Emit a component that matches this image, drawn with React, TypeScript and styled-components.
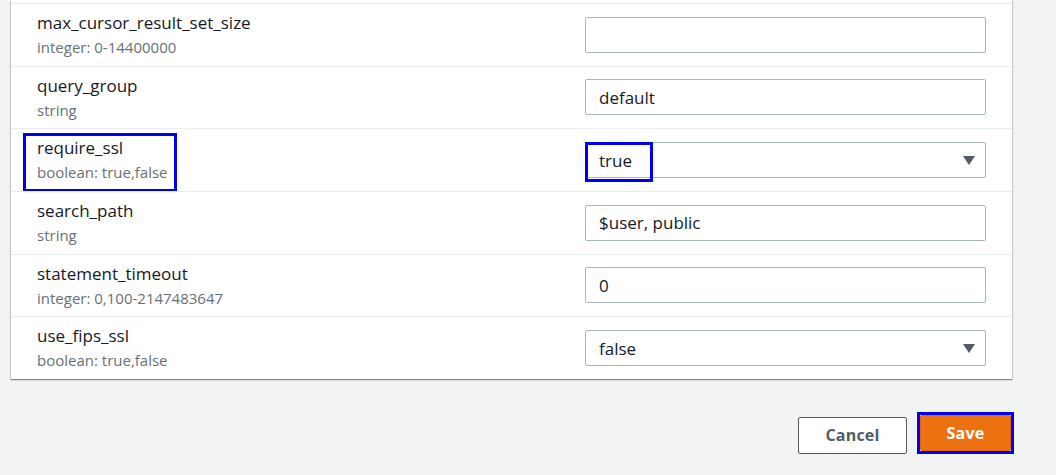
import React from "react";
import styled, { createGlobalStyle } from "styled-components";

const Global = createGlobalStyle`
  html, body { margin: 0; padding: 0; background: #f2f3f3; }
  body { font-family: "Open Sans", "Noto Sans", Arial, sans-serif; color: #16191f; }
  * { box-sizing: border-box; }
`;

const Page = styled.div`
  width: 1056px;
  height: 475px;
  overflow: hidden;
  padding: 0 44px 0 11px;
  display: flex;
  flex-direction: column;
`;

const Panel = styled.div`
  background: #fff;
  padding-top: 3px;
  box-shadow: 0 1px 1px 0 rgba(0, 28, 36, 0.3), 1px 1px 1px 0 rgba(0, 28, 36, 0.15),
    -1px 1px 1px 0 rgba(0, 28, 36, 0.15);
`;

const Row = styled.div`
  position: relative;
  display: grid;
  grid-template-columns: 1fr 401px;
  align-items: center;
  height: 62.67px;
  padding: 0 26px;
  border-top: 1px solid #eaeded;
`;

const LabelCell = styled.div`
  display: flex;
  flex-direction: column;
  align-self: start;
  padding-top: 7px;
`;

const Name = styled.div`
  font-size: 17px;
  line-height: 23px;
  color: #16191f;
`;

const Desc = styled.div`
  font-size: 15px;
  line-height: 22px;
  color: #687078;
  margin-top: 2px;
`;

const Field = styled.div`
  position: relative;
  height: 36px;
  border: 1px solid #aab7b8;
  border-radius: 2px;
  background: #fff;
  display: flex;
  align-items: center;
  justify-content: space-between;
  padding: 0 10px 0 13px;
  font-size: 17px;
  color: #16191f;
`;

const Caret = styled.svg`
  width: 12px;
  height: 9px;
  fill: #545b64;
`;

const Highlight = styled.div<{ $l: number; $t: number; $w: number; $h: number }>`
  position: absolute;
  left: ${(p) => p.$l}px;
  top: ${(p) => p.$t}px;
  width: ${(p) => p.$w}px;
  height: ${(p) => p.$h}px;
  border: 3px solid #0000f0;
  pointer-events: none;
`;

const Actions = styled.div`
  display: flex;
  justify-content: flex-end;
  align-items: center;
  gap: 10px;
  margin-top: 33px;
  margin-right: -2px;
`;

const CancelButton = styled.button`
  width: 109px;
  height: 37px;
  margin-top: 5px;
  background: #fff;
  border: 1px solid #545b64;
  border-radius: 2px;
  color: #545b64;
  font-family: inherit;
  font-weight: 700;
  font-size: 16px;
  letter-spacing: 0.2px;
`;

const SaveFrame = styled.div`
  border: 3px solid #0000f0;
  padding: 0;
  width: 97px;
  height: 42px;
  display: flex;
`;

const SaveButton = styled.button`
  flex: 1;
  background: #ec7211;
  border: 1px solid #eb5f07;
  border-radius: 2px;
  color: #fff;
  font-family: inherit;
  font-weight: 700;
  font-size: 16px;
  letter-spacing: 0.2px;
`;

type Param = {
  name: string;
  desc: string;
  value: string;
  select?: boolean;
  mark?: boolean;
};

const params: Param[] = [
  { name: "max_cursor_result_set_size", desc: "integer: 0-14400000", value: "" },
  { name: "query_group", desc: "string", value: "default" },
  { name: "require_ssl", desc: "boolean: true,false", value: "true", select: true, mark: true },
  { name: "search_path", desc: "string", value: "$user, public" },
  { name: "statement_timeout", desc: "integer: 0,100-2147483647", value: "0" },
  { name: "use_fips_ssl", desc: "boolean: true,false", value: "false", select: true },
];

export default function App() {
  return (
    <>
      <Global />
      <Page>
        <Panel>
          {params.map((p) => (
            <Row key={p.name}>
              <LabelCell>
                <Name>{p.name}</Name>
                <Desc>{p.desc}</Desc>
              </LabelCell>
              <Field>
                <span>{p.value}</span>
                {p.select && (
                  <Caret viewBox="0 0 12 9">
                    <path d="M0 0 H12 L6 9 Z" />
                  </Caret>
                )}
                {p.mark && <Highlight $l={-1} $t={-1} $w={68} $h={40} />}
              </Field>
              {p.mark && <Highlight $l={12} $t={4} $w={154} $h={59} />}
            </Row>
          ))}
        </Panel>
        <Actions>
          <CancelButton>Cancel</CancelButton>
          <SaveFrame>
            <SaveButton>Save</SaveButton>
          </SaveFrame>
        </Actions>
      </Page>
    </>
  );
}
